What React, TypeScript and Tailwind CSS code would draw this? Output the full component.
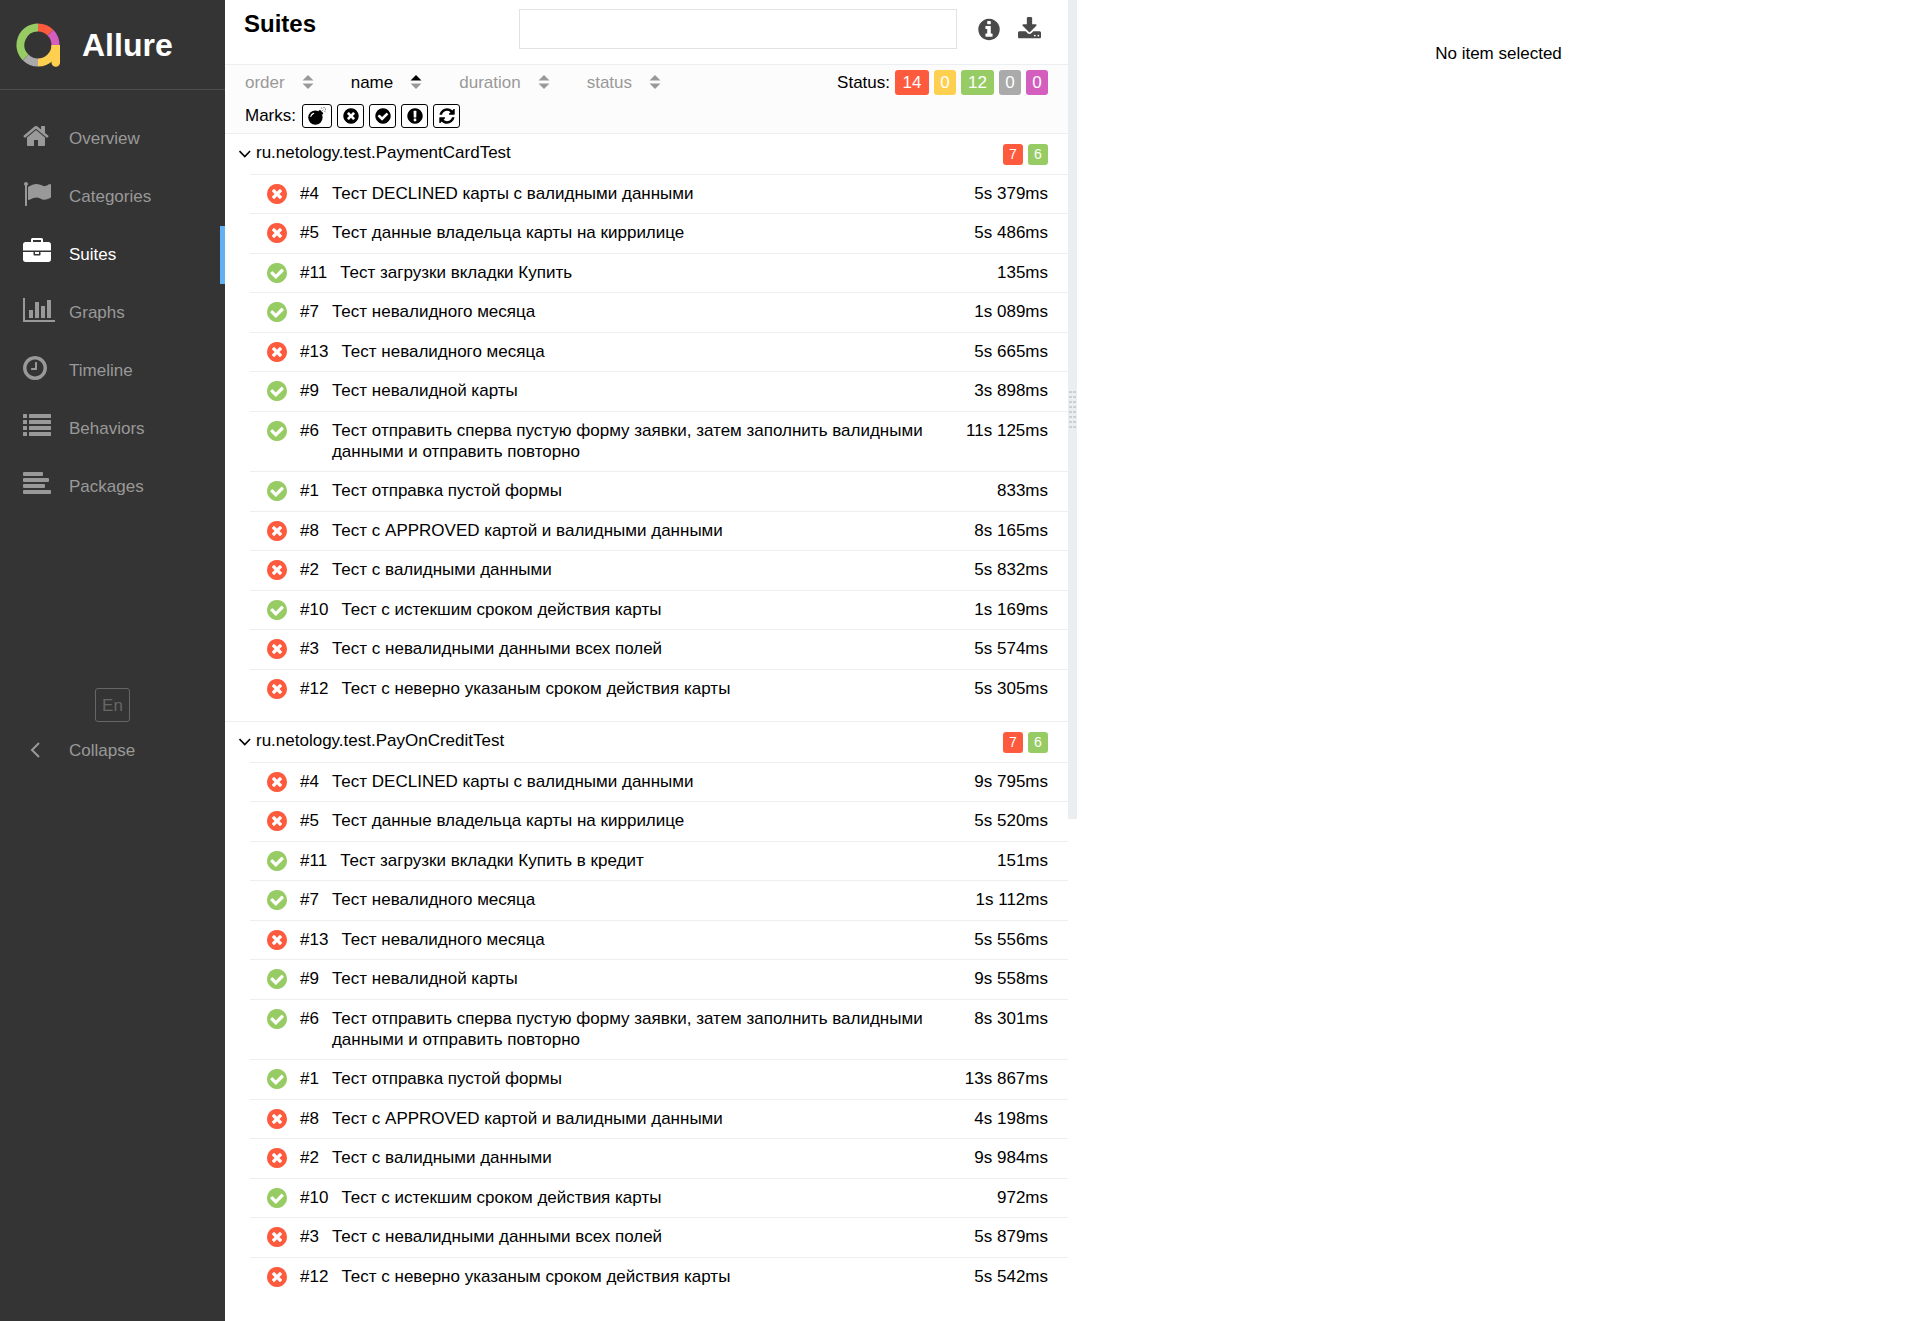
import type { ReactNode } from "react";

const CIRCLE =
  "q0 209-103 385.5t-279.5 279.5-385.5 103-385.5-103-279.5-279.5-103-385.5 103-385.5 279.5-279.5 385.5-103 385.5 103 279.5 279.5 103 385.5z";

const PATHS = {
  timesCircle:
    "M1277 1122q0-26-19-45l-181-181 181-181q19-19 19-45 0-27-19-46l-90-90q-19-19-46-19-26 0-45 19l-181 181-181-181q-19-19-45-19-27 0-46 19l-90 90q-19 19-19 46 0 26 19 45l181 181-181 181q-19 19-19 45 0 27 19 46l90 90q19 19 46 19 26 0 45-19l181-181 181 181q19 19 45 19 27 0 46-19l90-90q19-19 19-46zm387-226" +
    CIRCLE,
  checkCircle:
    "M1412 734q0-28-18-46l-91-90q-19-19-45-19t-45 19l-408 407-226-226q-19-19-45-19t-45 19l-91 90q-18 18-18 46 0 27 18 45l362 362q19 19 45 19 27 0 46-19l543-543q18-18 18-45zm252 162" +
    CIRCLE,
  exclamation:
    "M896 128q209 0 385.5 103t279.5 279.5 103 385.5-103 385.5-279.5 279.5-385.5 103-385.5-103-279.5-279.5-103-385.5 103-385.5 279.5-279.5 385.5-103zm128 1247v-190q0-14-9-23.5t-22-9.5h-192q-13 0-23 10t-10 23v190q0 13 10 23t23 10h192q13 0 22-9.5t9-23.5zm-2-344l18-621q0-12-10-18-10-8-24-8h-220q-14 0-24 8-10 6-10 18l17 621q0 10 10 17.5t24 7.5h185q14 0 23.5-7.5t10.5-17.5z",
  info:
    "M1152 1376v-160q0-14-9-23t-23-9h-96v-512q0-14-9-23t-23-9h-320q-14 0-23 9t-9 23v160q0 14 9 23t23 9h96v320h-96q-14 0-23 9t-9 23v160q0 14 9 23t23 9h448q14 0 23-9t9-23zm-128-896v-160q0-14-9-23t-23-9h-192q-14 0-23 9t-9 23v160q0 14 9 23t23 9h192q14 0 23-9t9-23zm640 416" +
    CIRCLE,
  refresh:
    "M1639 1056q0 5-1 7-64 268-268 434.5t-478 166.5q-146 0-282.5-55t-243.5-157l-129 129q-19 19-45 19t-45-19-19-45v-448q0-26 19-45t45-19h448q26 0 45 19t19 45-19 45l-137 137q71 66 161 102t187 36q134 0 250-65t186-179q11-17 53-117 8-23 30-23h192q13 0 22.5 9.5t9.5 22.5zm25-800v448q0 26-19 45t-45 19h-448q-26 0-45-19t-19-45 19-45l138-138q-148-137-349-137-134 0-250 65t-186 179q-11 17-53 117-8 23-30 23h-199q-13 0-22.5-9.5t-9.5-22.5v-7q65-268 270-434.5t480-166.5q146 0 284 55.5t245 156.5l130-129q19-19 45-19t45 19 19 45z",
  download:
    "M1344 1344q0-26-19-45t-45-19-45 19-19 45 19 45 45 19 45-19 19-45zm256 0q0-26-19-45t-45-19-45 19-19 45 19 45 45 19 45-19 19-45zm128-224v320q0 40-28 68t-68 28h-1472q-40 0-68-28t-28-68v-320q0-40 28-68t68-28h465l135 136q58 56 136 56t136-56l136-136h464q40 0 68 28t28 68zm-325-569q17 41-14 70l-448 448q-18 19-45 19t-45-19l-448-448q-31-29-14-70 17-39 59-39h256v-448q0-26 19-45t45-19h256q26 0 45 19t19 45v448h256q42 0 59 39z",
  home:
    "M1472 992v480q0 26-19 45t-45 19h-384v-384h-256v384h-384q-26 0-45-19t-19-45v-480q0-1 .5-3t.5-3l575-474 575 474q1 2 1 6zm223-69l-62 74q-8 9-21 11h-3q-13 0-21-7l-692-577-692 577q-12 8-24 7-13-2-21-11l-62-74q-8-10-7-23.5t11-21.5l719-599q32-26 76-26t76 26l244 204v-195q0-14 9-23t23-9h192q14 0 23 9t9 23v408l219 182q10 8 11 21.5t-7 23.5z",
  flag:
    "M320 256q0 72-64 110v1266q0 13-9.5 22.5t-22.5 9.5h-64q-13 0-22.5-9.5t-9.5-22.5v-1266q-64-38-64-110 0-53 37.5-90.5t90.5-37.5 90.5 37.5 37.5 90.5zm1472 64v763q0 25-12.5 38.5t-39.5 27.5q-215 116-369 116-61 0-123.5-22t-108.5-48-115.5-48-142.5-22q-192 0-464 146-17 9-33 9-26 0-45-19t-19-45v-742q0-32 31-55 21-14 79-43 236-120 421-120 107 0 200 29t219 88q38 19 88 19 54 0 117.5-21t110-47 88-47 54.5-21q26 0 45 19t19 45z",
  briefcase:
    "M640 256h512v-128h-512v128zm1152 640v480q0 66-47 113t-113 47h-1472q-66 0-113-47t-47-113v-480h672v160q0 26 19 45t45 19h320q26 0 45-19t19-45v-160h672zm-768 0v128h-256v-128h256zm768-480v384h-1792v-384q0-66 47-113t113-47h352v-160q0-40 28-68t68-28h576q40 0 68 28t28 68v160h352q66 0 113 47t47 113z",
  chart:
    "M640 896v512h-256v-512h256zm384-512v1024h-256v-1024h256zm1024 1152v128h-2048v-1536h128v1408h1920zm-640-896v768h-256v-768h256zm384-384v1152h-256v-1152h256z",
  clock:
    "M1024 544v448q0 14-9 23t-23 9h-320q-14 0-23-9t-9-23v-64q0-14 9-23t23-9h224v-352q0-14 9-23t23-9h64q14 0 23 9t9 23zm416 352q0-148-73-273t-198-198-273-73-273 73-198 198-73 273 73 273 198 198 273 73 273-73 198-198 73-273zm224 0" +
    CIRCLE,
};

function Icon({ d, box = "0 0 1792 1792", className }: { d: string; box?: string; className: string }) {
  return (
    <svg viewBox={box} className={className} fill="currentColor" aria-hidden="true">
      <path d={d} />
    </svg>
  );
}

const ROUND = "128 0 1536 1792";

function ListIcon() {
  return (
    <svg viewBox="0 0 28 28" className="h-7 w-7" fill="currentColor" aria-hidden="true">
      {[2, 8, 14, 20].map((y) => (
        <g key={y}>
          <rect x="0" y={y} width="4" height="4" rx="0.5" />
          <rect x="6" y={y} width="22" height="4" rx="0.5" />
        </g>
      ))}
    </svg>
  );
}

function AlignLeftIcon() {
  return (
    <svg viewBox="0 0 28 28" className="h-7 w-7" fill="currentColor" aria-hidden="true">
      <rect x="0" y="2" width="20" height="4" rx="1" />
      <rect x="0" y="8" width="26" height="4" rx="1" />
      <rect x="0" y="14" width="22" height="4" rx="1" />
      <rect x="0" y="20" width="28" height="4" rx="1" />
    </svg>
  );
}

function BombIcon() {
  return (
    <svg viewBox="0 0 18 18" className="h-[18px] w-[18px]" aria-hidden="true">
      <circle cx="7.4" cy="10.6" r="7.2" fill="currentColor" />
      <path d="M10.2 4.2l1.8-1.4 3.4 3.4-1.4 1.8z" fill="currentColor" />
      <path d="M2.8 9.4A5 5 0 0 1 5.6 6.4" fill="none" stroke="#fff" strokeWidth="1.2" strokeLinecap="round" />
      <path d="M13.6 4.6L15.4 2.6M12.8 0.8l1.4 0.6M15.2 0.4h1.6M17.4 1.4v1.8M16.6 4l0.6 1.2" fill="none" stroke="#777" strokeWidth="0.9" />
    </svg>
  );
}

function Logo() {
  const arc = { fill: "none", strokeWidth: 8 };
  return (
    <svg viewBox="0 0 44 44" className="h-11 w-11" aria-hidden="true">
      <path d="M9.6 34.4 A17.5 17.5 0 0 1 22 4.5" stroke="#97cc64" {...arc} />
      <path d="M22 4.5 A17.5 17.5 0 0 1 34.4 9.6" stroke="#fd5a3e" {...arc} />
      <path d="M34.4 9.6 A17.5 17.5 0 0 1 39.5 22" stroke="#d35ebe" {...arc} />
      <path d="M22 39.5 A17.5 17.5 0 0 1 9.6 34.4" stroke="#aaaaaa" {...arc} />
      <path d="M39.5 22 A17.5 17.5 0 0 1 22 39.5" stroke="#ffd050" {...arc} />
      <path d="M35.5 22h8.5v17.5a4 4 0 0 1-8.5 0z" fill="#ffd050" />
    </svg>
  );
}

const NAV: { label: string; icon: ReactNode; active?: boolean }[] = [
  { label: "Overview", icon: <Icon d={PATHS.home} box="64 0 1664 1792" className="h-7 w-[26px]" /> },
  { label: "Categories", icon: <Icon d={PATHS.flag} className="h-7 w-7" /> },
  { label: "Suites", icon: <Icon d={PATHS.briefcase} className="h-7 w-7" />, active: true },
  { label: "Graphs", icon: <Icon d={PATHS.chart} box="0 0 2048 1792" className="h-7 w-8" /> },
  { label: "Timeline", icon: <Icon d={PATHS.clock} box={ROUND} className="h-7 w-6" /> },
  { label: "Behaviors", icon: <ListIcon /> },
  { label: "Packages", icon: <AlignLeftIcon /> },
];

function Sidebar() {
  return (
    <aside className="w-[225px] shrink-0 bg-[#343434] text-[#999]">
      <a href="#" className="flex h-[90px] items-center gap-[22px] border-b border-[#4d4d4d] pl-4 text-white">
        <Logo />
        <span className="text-[32px] leading-10 font-bold">Allure</span>
      </a>
      <nav className="mt-5">
        {NAV.map((item) => (
          <a
            key={item.label}
            href={"#" + item.label.toLowerCase()}
            className={
              item.active
                ? "flex h-[58px] items-center border-r-[5px] border-[#62b1f3] pb-[2px] pl-[23px] text-white"
                : "flex h-[58px] items-center pb-[2px] pl-[23px]"
            }
          >
            <span className="w-[46px] pb-1">{item.icon}</span>
            {item.label}
          </a>
        ))}
      </nav>
      <div className="mt-[172px] flex justify-center">
        <button className="h-[34px] w-[35px] rounded-[3px] border border-[#666] text-[#666]">En</button>
      </div>
      <button className="mt-2 flex h-10 w-full items-center pl-[30px]">
        <svg viewBox="0 0 10 16" className="mr-[29px] h-4 w-[10px]" fill="none" stroke="currentColor" strokeWidth="2" aria-hidden="true">
          <path d="M9 1 2 8l7 7" />
        </svg>
        Collapse
      </button>
    </aside>
  );
}

function Sorter({ label, active }: { label: string; active?: boolean }) {
  return (
    <button className={active ? "flex items-center gap-[17px] text-black" : "flex items-center gap-[17px] text-[#999]"}>
      {label}
      <svg viewBox="0 0 12 16" className="h-4 w-3" aria-hidden="true">
        <path d="M0.5 6.5 L6 1 L11.5 6.5z" fill="currentColor" />
        <path d="M0.5 9.5 L6 15 L11.5 9.5z" fill="#999" />
      </svg>
    </button>
  );
}

const MARKS: { label: string; icon: ReactNode }[] = [
  { label: "Newly failed", icon: <BombIcon /> },
  { label: "Newly broken", icon: <Icon d={PATHS.timesCircle} className="h-[18px] w-[18px]" /> },
  { label: "Newly passed", icon: <Icon d={PATHS.checkCircle} className="h-[18px] w-[18px]" /> },
  { label: "Flaky", icon: <Icon d={PATHS.exclamation} className="h-[18px] w-[18px]" /> },
  { label: "Retries", icon: <Icon d={PATHS.refresh} className="h-[18px] w-[18px]" /> },
];

function Toolbar() {
  return (
    <div className="border-y border-[#eceff1] bg-[#fcfcfc] pr-5 pb-[5px] pl-5">
      <div className="flex h-[34px] items-center">
        <div className="flex gap-[37px]">
          <Sorter label="order" />
          <Sorter label="name" active />
          <Sorter label="duration" />
          <Sorter label="status" />
        </div>
        <div className="ml-auto flex items-center gap-[5px] text-white">
          <span className="text-black">Status:</span>
          <button className="h-[25px] w-[34px] rounded-[3px] bg-[#fd5a3e]">14</button>
          <button className="h-[25px] w-[22px] rounded-[3px] bg-[#ffd050]">0</button>
          <button className="h-[25px] w-[33px] rounded-[3px] bg-[#97cc64]">12</button>
          <button className="h-[25px] w-[22px] rounded-[3px] bg-[#aaa]">0</button>
          <button className="h-[25px] w-[22px] rounded-[3px] bg-[#d35ebe]">0</button>
        </div>
      </div>
      <div className="flex h-[29px] items-end gap-[5px]">
        <span className="pr-px pb-[2px]">Marks:</span>
        {MARKS.map((m, i) => (
          <button
            key={m.label}
            aria-label={m.label}
            className={
              i === 0
                ? "flex h-6 w-[30px] items-center justify-center rounded-[3px] border border-black bg-white text-black"
                : "flex h-6 w-[27px] items-center justify-center rounded-[3px] border border-black bg-white text-black"
            }
          >
            {m.icon}
          </button>
        ))}
      </div>
    </div>
  );
}

type Test = [n: number, name: string, passed: boolean, duration: string];

const LONG = "Тест отправить сперва пустую форму заявки, затем заполнить валидными данными и отправить повторно";

const GROUPS: { name: string; tests: Test[] }[] = [
  {
    name: "ru.netology.test.PaymentCardTest",
    tests: [
      [4, "Тест DECLINED карты с валидными данными", false, "5s 379ms"],
      [5, "Тест данные владельца карты на киррилице", false, "5s 486ms"],
      [11, "Тест загрузки вкладки Купить", true, "135ms"],
      [7, "Тест невалидного месяца", true, "1s 089ms"],
      [13, "Тест невалидного месяца", false, "5s 665ms"],
      [9, "Тест невалидной карты", true, "3s 898ms"],
      [6, LONG, true, "11s 125ms"],
      [1, "Тест отправка пустой формы", true, "833ms"],
      [8, "Тест с APPROVED картой и валидными данными", false, "8s 165ms"],
      [2, "Тест с валидными данными", false, "5s 832ms"],
      [10, "Тест с истекшим сроком действия карты", true, "1s 169ms"],
      [3, "Тест с невалидными данными всех полей", false, "5s 574ms"],
      [12, "Тест с неверно указаным сроком действия карты", false, "5s 305ms"],
    ],
  },
  {
    name: "ru.netology.test.PayOnCreditTest",
    tests: [
      [4, "Тест DECLINED карты с валидными данными", false, "9s 795ms"],
      [5, "Тест данные владельца карты на киррилице", false, "5s 520ms"],
      [11, "Тест загрузки вкладки Купить в кредит", true, "151ms"],
      [7, "Тест невалидного месяца", true, "1s 112ms"],
      [13, "Тест невалидного месяца", false, "5s 556ms"],
      [9, "Тест невалидной карты", true, "9s 558ms"],
      [6, LONG, true, "8s 301ms"],
      [1, "Тест отправка пустой формы", true, "13s 867ms"],
      [8, "Тест с APPROVED картой и валидными данными", false, "4s 198ms"],
      [2, "Тест с валидными данными", false, "9s 984ms"],
      [10, "Тест с истекшим сроком действия карты", true, "972ms"],
      [3, "Тест с невалидными данными всех полей", false, "5s 879ms"],
      [12, "Тест с неверно указаным сроком действия карты", false, "5s 542ms"],
    ],
  },
];

function Group({ name, tests }: { name: string; tests: Test[] }) {
  return (
    <section className="border-b border-[#eceff1] pb-[13px] last:border-b-0">
      <button className="flex h-10 w-full items-center pr-5 pl-[14px] text-left">
        <svg viewBox="0 0 12 8" className="mr-[5px] h-2 w-3" fill="none" stroke="currentColor" strokeWidth="1.6" aria-hidden="true">
          <path d="M0.5 1 5.8 6.5 11.1 1" />
        </svg>
        <span className="flex-1 pb-1">{name}</span>
        <span className="flex gap-[5px] text-center text-sm leading-[21px] text-white">
          <span className="w-5 rounded-[3px] bg-[#fd5a3e]">7</span>
          <span className="w-5 rounded-[3px] bg-[#97cc64]">6</span>
        </span>
      </button>
      <ul className="ml-[25px]">
        {tests.map(([n, title, passed, duration]) => (
          <li key={n} className="border-t border-[#eceff1] odd:pb-[9px] even:pb-[10px]">
            <a href={"#test-" + n} className="flex items-start pt-2 pr-5 pl-[17px]">
              <Icon
                d={passed ? PATHS.checkCircle : PATHS.timesCircle}
                box="128 128 1536 1536"
                className={passed ? "mt-px h-5 w-5 shrink-0 text-[#97cc64]" : "mt-px h-5 w-5 shrink-0 text-[#fd5a3e]"}
              />
              <span className="ml-[13px] shrink-0">#{n}</span>
              <span className="mr-5 ml-[13px] flex-1">{title}</span>
              <span className="shrink-0">{duration}</span>
            </a>
          </li>
        ))}
      </ul>
    </section>
  );
}

function Gutter() {
  return (
    <div className="flex h-[62vh] w-[9px] shrink-0 items-center justify-center bg-[#eaeef1]">
      <div className="grid grid-cols-2 gap-x-px gap-y-[3px]">
        {Array.from({ length: 16 }, (_, i) => (
          <span key={i} className="h-[2px] w-[3px] bg-[#ccd0d3]" />
        ))}
      </div>
    </div>
  );
}

export default function App() {
  return (
    <div className="flex min-h-screen bg-white font-['Liberation_Sans',Arial,sans-serif] text-[17px] leading-[21px] text-black">
      <Sidebar />
      <main className="min-w-0 flex-1">
        <header className="flex h-16 items-start pr-[27px] pl-[19px]">
          <h1 className="flex-1 pt-2 text-2xl leading-8 font-bold">Suites</h1>
          <input aria-label="Search" className="mt-[9px] mr-[21px] h-10 w-[55%] border border-[#e0e2e5] px-3 outline-none" />
          <button aria-label="Info" className="mt-[17px] mr-[18px] text-[#4a4a4a]">
            <Icon d={PATHS.info} box={ROUND} className="h-[25px] w-[22px]" />
          </button>
          <button aria-label="Download" className="mt-[17px] text-[#4a4a4a]">
            <Icon d={PATHS.download} box="64 0 1664 1792" className="h-[25px] w-[23px]" />
          </button>
        </header>
        <Toolbar />
        {GROUPS.map((g) => (
          <Group key={g.name} {...g} />
        ))}
      </main>
      <Gutter />
      <section className="flex-1 pt-[43px] text-center">No item selected</section>
    </div>
  );
}
